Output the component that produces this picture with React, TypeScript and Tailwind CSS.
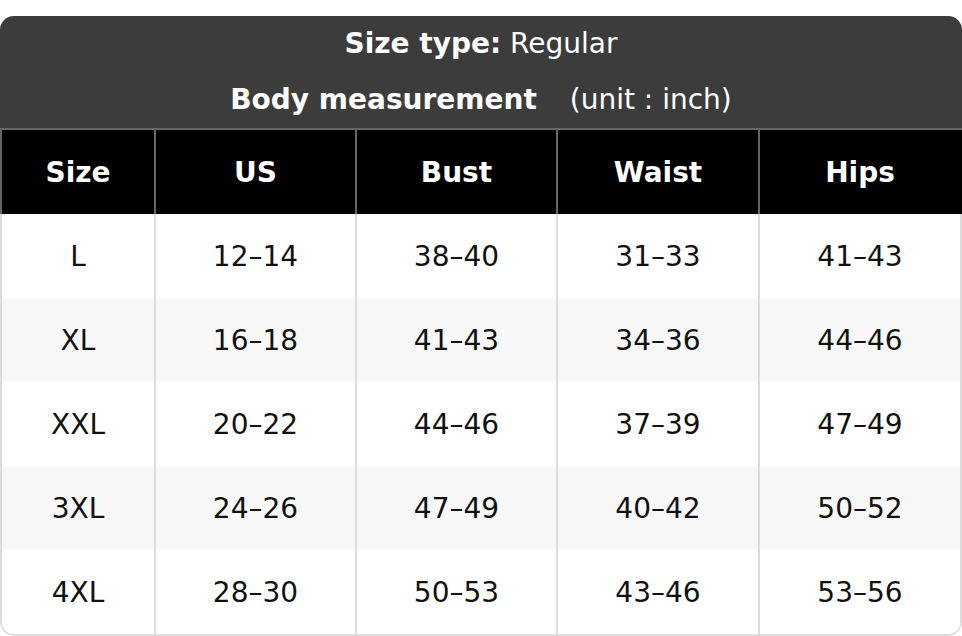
import React from "react";

const cols = ["Size", "US", "Bust", "Waist", "Hips"];
const rows = [
  ["L", "12–14", "38–40", "31–33", "41–43"],
  ["XL", "16–18", "41–43", "34–36", "44–46"],
  ["XXL", "20–22", "44–46", "37–39", "47–49"],
  ["3XL", "24–26", "47–49", "40–42", "50–52"],
  ["4XL", "28–30", "50–53", "43–46", "53–56"],
];

const grid = "grid grid-cols-[152px_201px_201px_202px_202px]";

export default function App() {
  return (
    <div className="w-[962px] h-[636px] bg-white pt-[16px]" style={{ fontFamily: '"DejaVu Sans", sans-serif' }}>
      <div className="rounded-[14px] overflow-hidden">
        <div className="bg-[#3c3c3c] text-white text-[28px] h-[112px] flex flex-col items-center">
          <div className="h-[56px] flex items-center">
            <span className="font-bold">Size type:</span>
            <span>&nbsp;Regular</span>
          </div>
          <div className="h-[56px] flex items-center">
            <span className="font-bold">Body measurement</span>
            <span className="ml-[33px]">(unit : inch)</span>
          </div>
        </div>
        <div className="border-t-2 border-[#666]">
          <div className={`${grid} bg-black border-x-2 border-l-[#666] border-r-black h-[84px]`}>
            {cols.map((c, i) => (
              <div
                key={c}
                className={`flex items-center justify-center pt-[2px] text-white font-bold text-[28px] ${i > 0 ? "border-l-2 border-[#666]" : ""}`}
              >
                {c}
              </div>
            ))}
          </div>
          <div className="border-x-2 border-b-2 border-[#dcdcdc] rounded-b-[14px] overflow-hidden">
            {rows.map((r, ri) => (
              <div key={ri} className={`${grid} h-[84px] ${ri % 2 === 1 ? "bg-[#f8f8f8]" : "bg-white"}`}>
                {r.map((v, ci) => (
                  <div
                    key={ci}
                    className={`flex items-center justify-center pt-[2px] text-[#111] text-[28px] ${ci > 0 ? "border-l-2 border-[#dcdcdc]" : ""}`}
                  >
                    {v}
                  </div>
                ))}
              </div>
            ))}
          </div>
        </div>
      </div>
    </div>
  );
}
